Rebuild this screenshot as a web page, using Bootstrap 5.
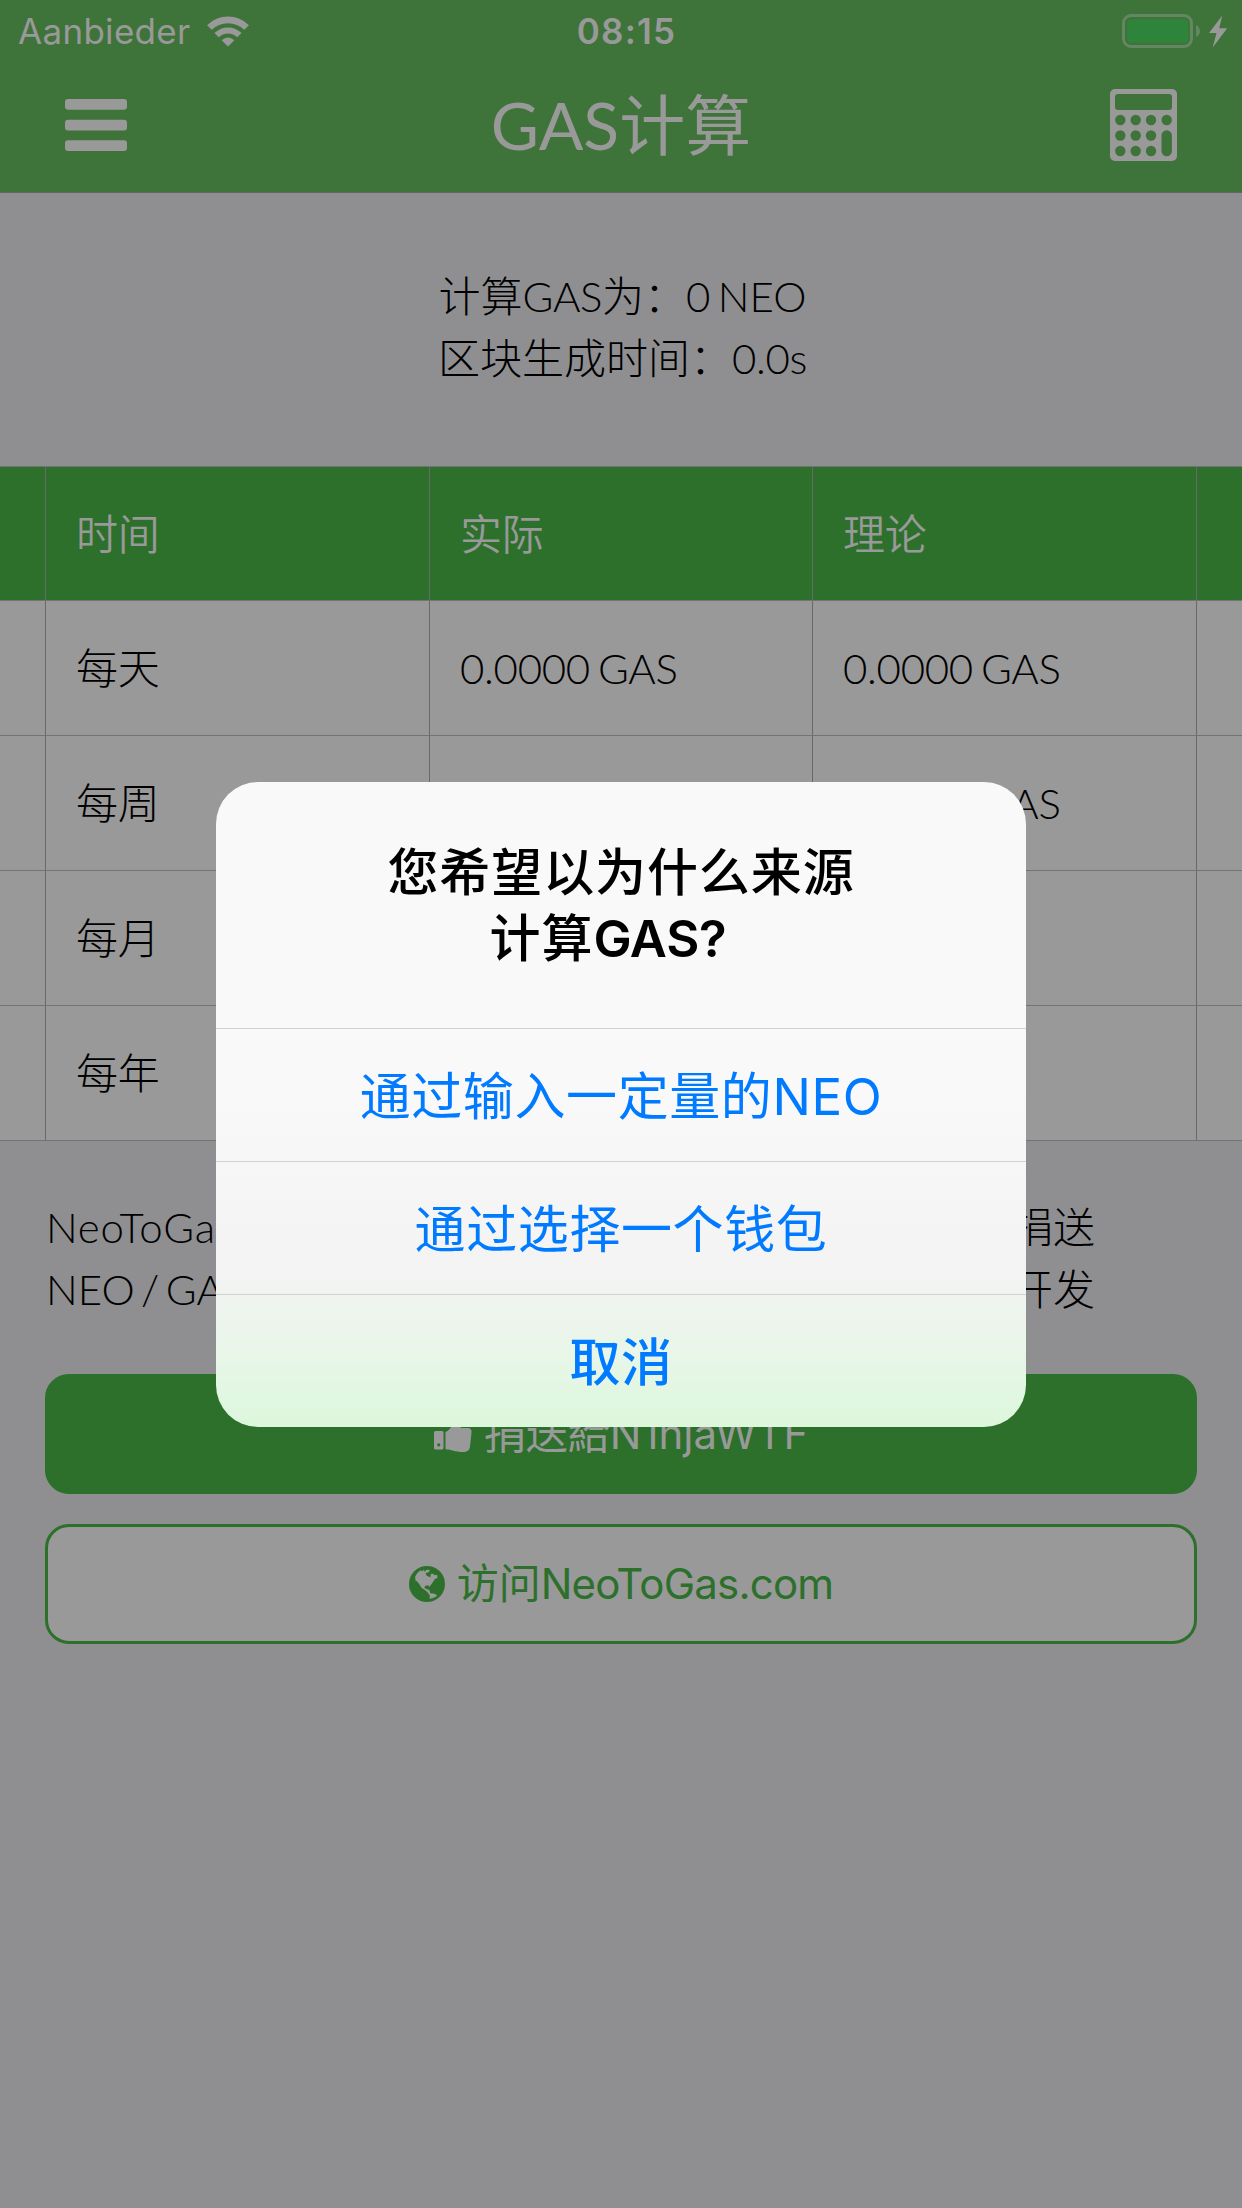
<!DOCTYPE html>
<html lang="zh-CN">
<head>
<meta charset="utf-8">
<meta name="viewport" content="width=device-width, initial-scale=1">
<title>GAS计算</title>
<link href="https://cdn.jsdelivr.net/npm/bootstrap@5.3.0/dist/css/bootstrap.min.css" rel="stylesheet">
<style>
:root{--ui:Inter,"Noto Sans CJK SC",sans-serif;--brand:#2c702c;--dim:#999}
body{background:#8f8f92;color:#000;font-family:Lato,"Noto Sans CJK SC",sans-serif;font-weight:300;font-size:42px;line-height:62px;min-height:2208px;overflow:hidden}
svg{display:block;flex:none}
.topbar{background:#3e743a;color:var(--dim);height:193px;border-bottom:1px solid #676369}
.statusbar{height:60px;font-family:var(--ui);font-size:36px;line-height:60px;padding:2px 11px 0 18px}
.statusbar>div{flex:1 1 0}
.carrier{font-size:35px;letter-spacing:.3px;font-weight:400}
.clock{font-weight:600;font-size:35px;letter-spacing:1.2px;padding-left:4px}
.titlebar{height:130px;padding:0 65px}
.titlebar>div{flex:1 1 0}
.titlebar h1{font-size:66px;font-weight:400;line-height:80px}
.info{height:273px;padding-top:72px;word-spacing:-4px;padding-left:3px}
.num{letter-spacing:-.4px}
.grid-table{border-top:1px solid #737276}
.grid-row{height:135px;border-bottom:1px solid #737276;background:var(--dim);word-spacing:-3px;letter-spacing:-.3px}
.grid-row:first-child{height:134px;background:var(--brand);color:var(--dim);font-weight:350}
.grid-row>div{border-left:1px solid #69696b;padding-left:30px;width:384px}
.grid-row>div:nth-child(3){width:383px}
.grid-row>.edge{width:45px;border:0;padding:0}
.grid-row>.edge-end{width:auto;flex:1;padding:0}
.about{padding:55px 147px 54px 46px}
.about .lead-in{letter-spacing:.8px}
.about span{word-spacing:-5px}
.actions{padding:0 45px;gap:30px}
.actions .btn{height:120px;border:3px solid var(--brand);border-radius:24px;font-family:var(--ui);font-size:42px;font-weight:400;line-height:62px;gap:12px;padding:0}
.donate,.donate:hover{background:var(--brand);color:var(--dim)}
.visit,.visit:hover{background:var(--dim);color:var(--brand)}
.site{letter-spacing:-.8px}
.alertbox{width:810px;height:645px;border-radius:42px;background:linear-gradient(#f9f9f9 0,#f9f9f9 48%,#f3f3f3 76%,#e9f6e9 88%,#dcf7dc 100%);font-family:var(--ui);font-size:51px;overflow:hidden}
.alertbox h2{height:246px;font-size:51px;line-height:66px;font-weight:500;letter-spacing:.9px;padding-top:58px;margin:0}
.asset{font-weight:600;letter-spacing:-.3px;padding-right:26px}
.choice{height:133px;border:0;border-top:1px solid #cfd3d1;background:none;color:#007aff;font-weight:400;line-height:132px;letter-spacing:.6px;padding:2px 0 0}
</style>
</head>
<body>
<header class="topbar">
  <div class="statusbar d-flex align-items-center">
    <div class="d-flex align-items-center gap-3">
      <span class="carrier">Aanbieder</span>
      <svg width="42" height="31" viewBox="0 0 42 31" fill="none" stroke="#999"><path d="M2.400 11.500a26.500 26.500 0 0 1 37.200 0" stroke-width="6.600"/><path d="M9.600 19.100a16.200 16.200 0 0 1 22.800 0" stroke-width="6"/><path d="M21 30.500l-6.400-6.300q6.400-5.200 12.800 0z" fill="#999" stroke="none"/></svg>
    </div>
    <span class="clock">08:15</span>
    <div class="d-flex justify-content-end">
      <svg width="109" height="36" viewBox="1122 12 109 36"><rect x="1123.500" y="14.500" width="68" height="31" rx="7.500" fill="none" stroke="#638762" stroke-width="3"/><rect x="1127.500" y="18.500" width="60.500" height="23" rx="3.500" fill="#2f843c"/><path d="M1196 24q4 2 4 6t-4 6z" fill="#638762"/><path d="M1222.300 14.500L1209 32h7.500L1212.700 46.500L1227.200 27.200h-8z" fill="#999"/></svg>
    </div>
  </div>
  <div class="titlebar d-flex align-items-center">
    <div><svg width="62" height="52" viewBox="0 0 62 52" fill="#999"><rect width="62" height="10.700" rx="3"/><rect y="20.700" width="62" height="10.700" rx="3"/><rect y="41.300" width="62" height="10.700" rx="3"/></svg></div>
    <h1 class="m-0">GAS计算</h1>
    <div class="d-flex justify-content-end"><svg width="67" height="72" viewBox="0 0 67 72"><rect width="67" height="72" rx="5" fill="#999"/><g fill="#3e743a"><rect x="5" y="5" width="57" height="16" rx="3"/><circle cx="10.300" cy="31" r="5.200"/><circle cx="25.700" cy="31" r="5.200"/><circle cx="41" cy="31" r="5.200"/><circle cx="56.700" cy="31" r="5.200"/><circle cx="10.300" cy="46.500" r="5.200"/><circle cx="25.700" cy="46.500" r="5.200"/><circle cx="41" cy="46.500" r="5.200"/><circle cx="10.300" cy="62" r="5.200"/><circle cx="25.700" cy="62" r="5.200"/><circle cx="41" cy="62" r="5.200"/><rect x="51.500" y="41.300" width="10.400" height="25.900" rx="5.200"/></g></svg></div>
  </div>
</header>
<main>
  <section class="info text-center"><div>计算<span class="num">GAS</span>为：0 NEO</div><div>区块生成时间：<span class="num">0.0s</span></div></section>
  <section class="grid-table">
    <div class="grid-row d-flex"><div class="edge"></div><div class="d-flex align-items-center">时间</div><div class="d-flex align-items-center">实际</div><div class="d-flex align-items-center">理论</div><div class="edge-end"></div></div>
    <div class="grid-row d-flex"><div class="edge"></div><div class="d-flex align-items-center">每天</div><div class="d-flex align-items-center">0.0000 GAS</div><div class="d-flex align-items-center">0.0000 GAS</div><div class="edge-end"></div></div>
    <div class="grid-row d-flex"><div class="edge"></div><div class="d-flex align-items-center">每周</div><div class="d-flex align-items-center">0.0000 GAS</div><div class="d-flex align-items-center">0.0000 GAS</div><div class="edge-end"></div></div>
    <div class="grid-row d-flex"><div class="edge"></div><div class="d-flex align-items-center">每月</div><div></div><div></div><div class="edge-end"></div></div>
    <div class="grid-row d-flex"><div class="edge"></div><div class="d-flex align-items-center">每年</div><div></div><div></div><div class="edge-end"></div></div>
  </section>
  <section class="about">
    <div class="d-flex justify-content-between"><span class="lead-in">NeoToGas</span><span>捐送</span></div>
    <div class="d-flex justify-content-between"><span>NEO / GAS</span><span>开发</span></div>
  </section>
  <section class="actions d-flex flex-column">
    <button class="btn donate d-flex align-items-center justify-content-center"><svg width="38" height="38" viewBox="0 0 38 38" fill="currentColor"><path fill-rule="evenodd" d="M1.500 16H8q1.500 0 1.500 1.500V33Q9.500 34.500 8 34.500H1.500Q0 34.500 0 33V17.500Q0 16 1.500 16zM4.700 28.300a1.600 1.600 0 1 0 .1 0z"/><path d="M11.500 17c3-1 5-4 7-7s1.500-8 5-8c5 0 5.500 5 3 11h7c3 0 4.500 2 4 4.500l-1.500 14c-.3 4-3 5.500-7 5.500-9 0-11-2.500-16-2.500-1 0-1.500-.5-1.500-1.500z"/></svg><span>捐送給N1njaWTF</span></button>
    <button class="btn visit d-flex align-items-center justify-content-center"><svg width="36" height="36" viewBox="27 558 108 108"><circle cx="81" cy="612" r="54" fill="#2c702c"/><path d="M45 591L52 579L62 571L66 574L72 569L74 575L80 569L90 570L86 577L77 579L80 587L91 592L93 581L99 581L104 586L111 584L113 593L104 598L99 606L93 614L88 621L85 616L76 617L73 624L80 627L88 630L91 640L104 641L112 647Q101 655 88 656L90 648L84 638L75 630L65 624L58 613L51 604L47 603z" fill="#999"/></svg><span>访问<span class="site">NeoToGas.com</span></span></button>
  </section>
</main>
<div class="position-fixed top-0 start-0 w-100 h-100 d-flex align-items-center justify-content-center">
  <div class="alertbox d-flex flex-column text-center" role="dialog">
    <h2>您希望以为什么来源<br>计算<span class="asset">GAS?</span></h2>
    <button class="choice">通过输入一定量的NEO</button>
    <button class="choice">通过选择一个钱包</button>
    <button class="choice fw-medium">取消</button>
  </div>
</div>
<script src="https://cdn.jsdelivr.net/npm/bootstrap@5.3.0/dist/js/bootstrap.bundle.min.js"></script>
</body>
</html>
